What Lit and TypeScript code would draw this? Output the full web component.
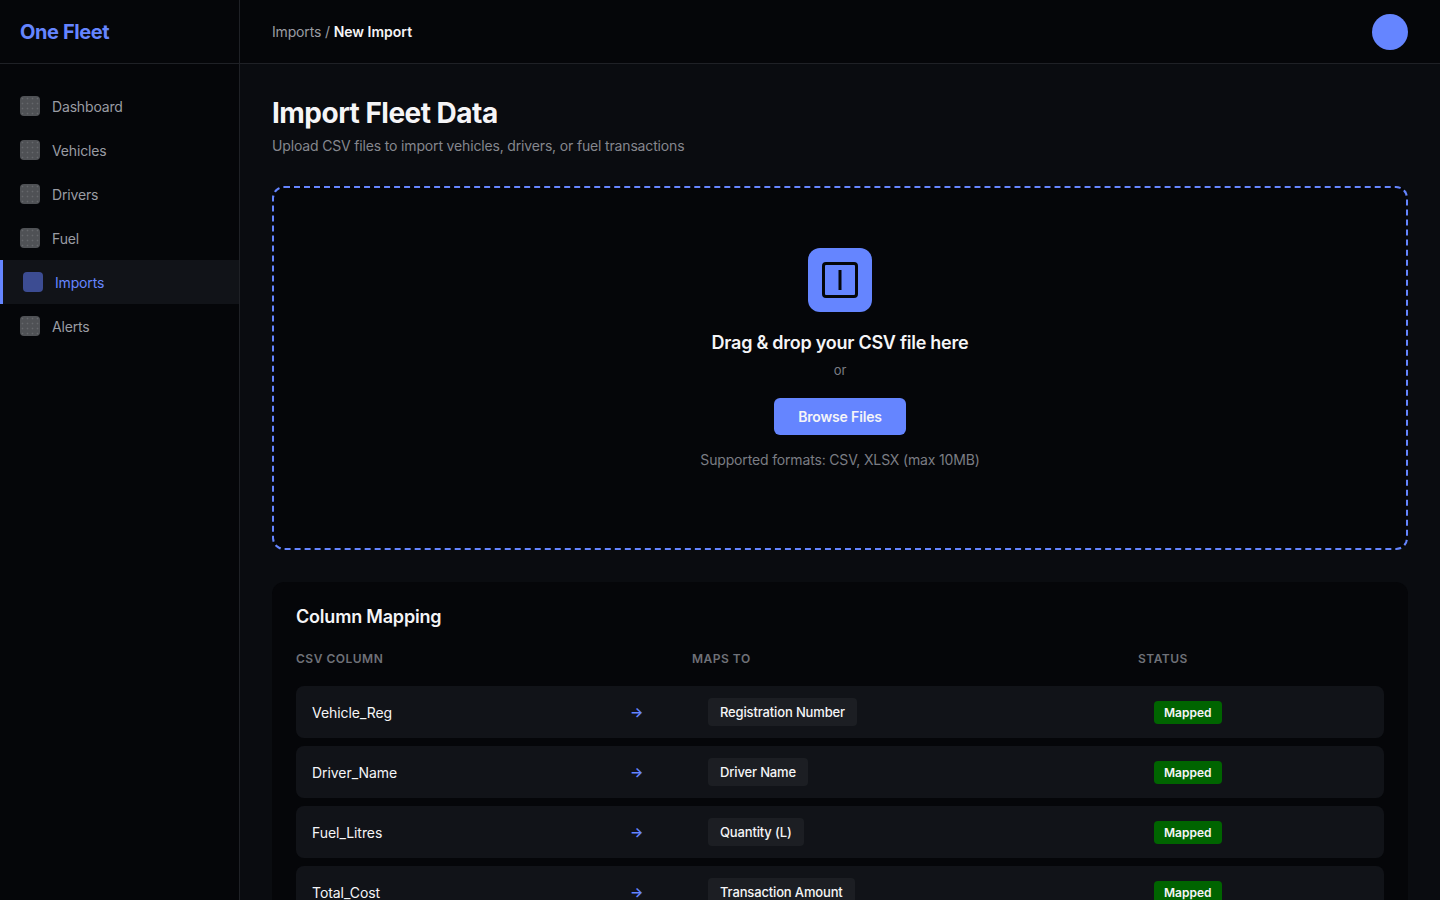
import { LitElement, html, css } from "lit";
import { customElement } from "lit/decorators.js";

const NAV = ["Dashboard", "Vehicles", "Drivers", "Fuel", "Imports", "Alerts"];

const ROWS = [
  { csv: "Vehicle_Reg", field: "Registration Number" },
  { csv: "Driver_Name", field: "Driver Name" },
  { csv: "Fuel_Litres", field: "Quantity (L)" },
  { csv: "Total_Cost", field: "Transaction Amount" },
];

@customElement("app-root")
export class AppRoot extends LitElement {
  static styles = css`
    :host {
      display: flex;
      height: 100vh;
      overflow: hidden;
      background: #0a0c10;
      color: #f5f5f7;
      font-family: Inter, "Liberation Sans", sans-serif;
      font-size: 14px;
      letter-spacing: -0.16px;
    }

    .sidebar {
      width: 240px;
      flex-shrink: 0;
      box-sizing: border-box;
      background: #050609;
      border-right: 1px solid #1f2126;
    }

    .logo {
      height: 64px;
      box-sizing: border-box;
      display: flex;
      align-items: center;
      padding: 0 20px;
      border-bottom: 1px solid #1f2126;
      color: #6585ff;
      font-size: 20px;
      font-weight: 700;
      letter-spacing: -0.4px;
    }

    .nav {
      padding: 20px 0;
    }

    .nav-item {
      height: 44px;
      box-sizing: border-box;
      display: flex;
      align-items: center;
      gap: 12px;
      padding: 0 20px;
      color: #9a9ca3;
    }

    .nav-item.active {
      background: #111318;
      border-left: 3px solid #6585ff;
      color: #6585ff;
    }

    .nav-icon {
      width: 20px;
      height: 20px;
      border-radius: 4px;
      background-color: #4f5155;
      background-image: radial-gradient(#66686c 0.7px, transparent 1.1px);
      background-size: 5px 5px;
    }

    .nav-item.active .nav-icon {
      background-color: #3c4c92;
      background-image: none;
    }

    .main {
      flex: 1;
      min-width: 0;
    }

    .topbar {
      height: 64px;
      box-sizing: border-box;
      display: flex;
      align-items: center;
      justify-content: space-between;
      padding: 0 32px;
      background: #050609;
      border-bottom: 1px solid #1f2126;
      color: #9a9ca3;
    }

    .topbar strong {
      color: #f5f5f7;
      font-weight: 600;
      letter-spacing: 0;
    }

    .avatar {
      width: 36px;
      height: 36px;
      border-radius: 50%;
      background: #6585ff;
    }

    .content {
      padding: 32px;
    }

    h1 {
      margin: 0 0 6px;
      font-size: 28px;
      line-height: 34px;
      font-weight: 700;
      letter-spacing: -0.52px;
    }

    .subtitle {
      margin: 0 0 30px;
      line-height: 20px;
      color: #85878e;
    }

    .dropzone {
      height: 364px;
      box-sizing: border-box;
      margin-bottom: 32px;
      display: flex;
      flex-direction: column;
      align-items: center;
      padding-top: 60px;
      background: #050609;
      border: 2px dashed #6585ff;
      border-radius: 12px;
    }

    .upload-icon {
      width: 64px;
      height: 64px;
      border-radius: 12px;
      background: #6585ff;
      display: flex;
      align-items: center;
      justify-content: center;
      margin-bottom: 20px;
    }

    .drop-title {
      font-size: 18px;
      line-height: 22px;
      font-weight: 600;
      letter-spacing: -0.26px;
      margin-bottom: 6px;
    }

    .or {
      font-size: 13px;
      line-height: 20px;
      color: #7b7d84;
      margin-bottom: 18px;
    }

    .browse {
      width: 132px;
      height: 37px;
      border: 0;
      border-radius: 6px;
      background: #6585ff;
      color: #f5f5f7;
      font: 600 14px Inter, "Liberation Sans", sans-serif;
      letter-spacing: -0.16px;
      margin-bottom: 16px;
    }

    .formats {
      line-height: 18px;
      color: #7b7d84;
    }

    .card {
      padding: 24px;
      background: #050609;
      border-radius: 12px;
    }

    h2 {
      margin: 0 0 22px;
      font-size: 18px;
      line-height: 22px;
      font-weight: 600;
      letter-spacing: -0.2px;
    }

    .head {
      display: grid;
      grid-template-columns: 396px 446px 1fr;
      height: 16px;
      margin-bottom: 20px;
      align-items: center;
      font-size: 12px;
      font-weight: 600;
      letter-spacing: 0.5px;
      color: #6f7178;
    }

    .rows {
      display: flex;
      flex-direction: column;
      gap: 8px;
    }

    .row {
      display: grid;
      grid-template-columns: 318px 78px 446px 1fr;
      align-items: center;
      height: 52px;
      box-sizing: border-box;
      padding: 0 16px;
      background: #111318;
      border-radius: 8px;
    }

    .csv {
      letter-spacing: -0.06px;
    }

    .arrow {
      margin-bottom: 2px;
      font-weight: 600;
      color: #6585ff;
    }

    .field {
      justify-self: start;
      padding: 0 12px;
      line-height: 28px;
      font-size: 13px;
      font-weight: 500;
      letter-spacing: -0.15px;
      background: #1c1e23;
      border-radius: 4px;
    }

    .badge {
      justify-self: start;
      padding: 0 10px;
      line-height: 23px;
      font-size: 12px;
      font-weight: 600;
      letter-spacing: 0;
      background: #006400;
      border-radius: 4px;
    }
  `;

  render() {
    return html`
      <aside class="sidebar">
        <div class="logo">One Fleet</div>
        <nav class="nav">
          ${NAV.map(
            (name) => html`
              <div class="nav-item ${name === "Imports" ? "active" : ""}">
                <span class="nav-icon"></span>
                <span>${name}</span>
              </div>
            `
          )}
        </nav>
      </aside>
      <div class="main">
        <header class="topbar">
          <div>Imports / <strong>New Import</strong></div>
          <div class="avatar"></div>
        </header>
        <div class="content">
          <h1>Import Fleet Data</h1>
          <p class="subtitle">Upload CSV files to import vehicles, drivers, or fuel transactions</p>
          <section class="dropzone">
            <div class="upload-icon">
              <svg width="36" height="36" viewBox="0 0 36 36" fill="none" stroke="#050609">
                <rect x="1.5" y="1.5" width="33" height="33" rx="2.5" stroke-width="3"></rect>
                <path d="M18 8v20" stroke-width="3"></path>
              </svg>
            </div>
            <div class="drop-title">Drag &amp; drop your CSV file here</div>
            <div class="or">or</div>
            <button class="browse">Browse Files</button>
            <div class="formats">Supported formats: CSV, XLSX (max 10MB)</div>
          </section>
          <section class="card">
            <h2>Column Mapping</h2>
            <div class="head">
              <span>CSV COLUMN</span>
              <span>MAPS TO</span>
              <span>STATUS</span>
            </div>
            <div class="rows">
              ${ROWS.map(
                (row) => html`
                  <div class="row">
                    <span class="csv">${row.csv}</span>
                    <span class="arrow">→</span>
                    <span class="field">${row.field}</span>
                    <span class="badge">Mapped</span>
                  </div>
                `
              )}
            </div>
          </section>
        </div>
      </div>
    `;
  }
}
